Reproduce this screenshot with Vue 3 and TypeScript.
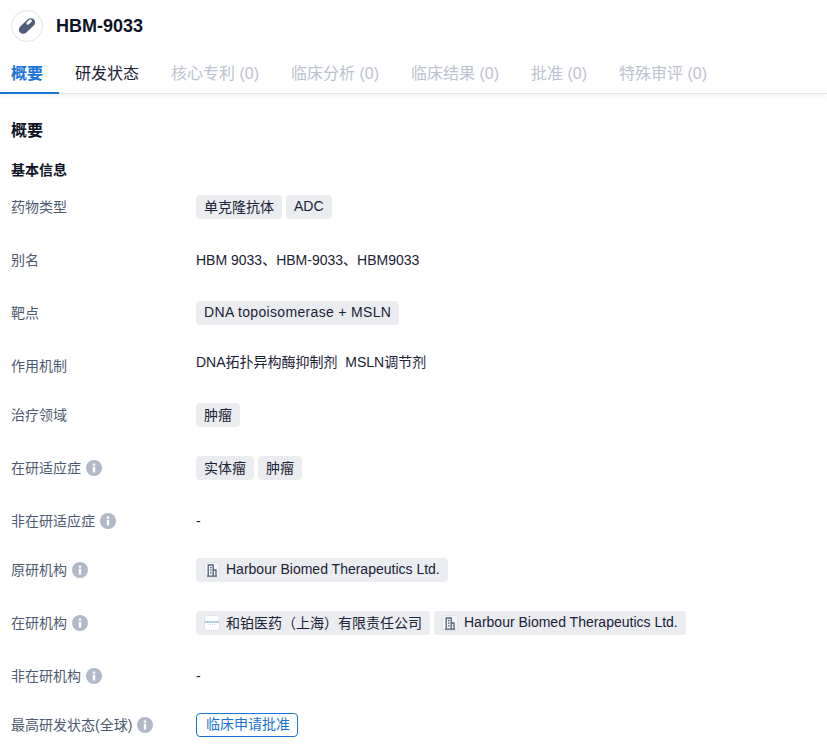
<script setup lang="ts">
interface Tag { text: string; icon?: 'building' | 'logo'; wide?: boolean }
interface Row { label: string; info?: boolean; short?: boolean; tight?: boolean; tags?: Tag[]; text?: string; status?: string }

const tabs = [
  { text: '概要', state: 'active' },
  { text: '研发状态', state: 'normal' },
  { text: '核心专利 (0)', state: 'off' },
  { text: '临床分析 (0)', state: 'off' },
  { text: '临床结果 (0)', state: 'off' },
  { text: '批准 (0)', state: 'off' },
  { text: '特殊审评 (0)', state: 'off' },
]

const hb = 'Harbour Biomed Therapeutics Ltd.'
const rows: Row[] = [
  { label: '药物类型', tags: [{ text: '单克隆抗体' }, { text: 'ADC' }] },
  { label: '别名', text: 'HBM 9033、HBM-9033、HBM9033' },
  { label: '靶点', tags: [{ text: 'DNA topoisomerase + MSLN', wide: true }] },
  { label: '作用机制', short: true, tight: true, text: 'DNA拓扑异构酶抑制剂  MSLN调节剂' },
  { label: '治疗领域', tags: [{ text: '肿瘤' }] },
  { label: '在研适应症', info: true, tags: [{ text: '实体瘤' }, { text: '肿瘤' }] },
  { label: '非在研适应症', info: true, short: true, text: '-' },
  { label: '原研机构', info: true, tags: [{ text: hb, icon: 'building' }] },
  { label: '在研机构', info: true, tags: [{ text: '和铂医药（上海）有限责任公司', icon: 'logo' }, { text: hb, icon: 'building' }] },
  { label: '非在研机构', info: true, short: true, text: '-' },
  { label: '最高研发状态(全球)', info: true, status: '临床申请批准' },
]
</script>

<template>
  <div class="page">
    <header class="head">
      <span class="avatar">
        <svg width="20" height="20" viewBox="0 0 20 20">
          <g transform="rotate(-43 10 10)">
            <rect x="0.5" y="5.7" width="19" height="8.6" rx="4.3" fill="#4f5d78" />
            <rect x="11" y="7.1" width="6.4" height="3" rx="1.5" fill="#fff" />
          </g>
        </svg>
      </span>
      <h1 class="title">HBM-9033</h1>
    </header>

    <nav class="tabs">
      <span v-for="t in tabs" :key="t.text" class="tab" :class="t.state">{{ t.text }}</span>
    </nav>

    <main class="body">
      <h2 class="h2">概要</h2>
      <h3 class="h3">基本信息</h3>
      <div class="rows">
        <div v-for="r in rows" :key="r.label" class="row" :class="{ short: r.short, tight: r.tight }">
          <div class="label">
            <span class="label-text">{{ r.label }}</span>
            <svg v-if="r.info" class="info" width="16" height="16" viewBox="0 0 16 16">
              <circle cx="8" cy="8" r="8" fill="#b1b8c7" />
              <rect x="6.8" y="3.5" width="2.4" height="2.2" fill="#fff" />
              <rect x="6.8" y="6.8" width="2.4" height="5.7" fill="#fff" />
            </svg>
          </div>
          <div class="value">
            <span v-if="r.text" class="plain">{{ r.text }}</span>
            <span v-for="t in r.tags" :key="t.text" class="tag" :class="{ wide: t.wide }">
              <span v-if="t.icon" class="tag-icon" :class="t.icon">
                <svg v-if="t.icon === 'building'" width="12" height="13" viewBox="0 0 12 13" fill="none" stroke="#4f5d78" stroke-width="1.3">
                  <path d="M2.2 12.2V1h5v11.2M7.2 6h2.8v6.2M1 12.2h10M4 3.6h1.6M4 6.2h1.6M4 8.8h1.6" />
                </svg>
                <svg v-else width="14" height="8" viewBox="0 0 14 8">
                  <line x1="0" y1="3" x2="14" y2="3" stroke="#6fa9d6" stroke-width="1.4" stroke-dasharray="1.2 0.5" />
                  <line x1="3" y1="5.5" x2="11" y2="5.5" stroke="#c3dcea" stroke-width="1" stroke-dasharray="1 1" />
                </svg>
              </span>
              <span class="tag-text">{{ t.text }}</span>
            </span>
            <span v-if="r.status" class="status">{{ r.status }}</span>
          </div>
        </div>
      </div>
    </main>
  </div>
</template>

<style>
html, body { margin: 0; background: #fff; }
</style>

<style scoped>
.page {
  width: 827px;
  height: 748px;
  overflow: hidden;
  font-family: "Liberation Sans", "Noto Sans CJK SC", sans-serif;
  font-size: 14px;
  color: #1b2236;
}
.head {
  display: flex;
  align-items: center;
  gap: 13px;
  padding: 10px 11px 0;
  height: 32px;
}
.avatar {
  width: 30px;
  height: 30px;
  border: 1px solid #dfe2e8;
  border-radius: 50%;
  display: flex;
  align-items: center;
  justify-content: center;
}
.title {
  margin: 0;
  font-size: 18px;
  font-weight: 700;
  color: #0e1426;
}
.tabs {
  display: flex;
  margin-top: 10px;
  height: 42px;
  box-sizing: border-box;
  border-bottom: 1px solid #e2e4e9;
  box-shadow: 0 2px 4px rgba(30, 40, 60, 0.06);
}
.tab {
  padding: 0 16px;
  line-height: 44px;
  font-size: 16px;
  height: 42px;
  box-sizing: border-box;
  white-space: nowrap;
}
.tab.active {
  padding-left: 11px;
  color: #1a73d9;
  font-weight: 700;
  border-bottom: 2px solid #1a73d9;
}
.tab.normal { color: #1b2236; }
.tab.off { color: #bcc2cf; }
.body { padding: 0 11px; }
.h2 {
  margin: 27px 0 0;
  font-size: 16px;
  line-height: 20px;
  font-weight: 700;
  color: #0e1426;
}
.h3 {
  margin: 19px 0 0;
  font-size: 14px;
  line-height: 20px;
  font-weight: 700;
  color: #0e1426;
}
.rows {
  display: flex;
  flex-direction: column;
  gap: 29px;
  margin-top: 15px;
}
.row {
  display: flex;
  height: 24px;
}
.row.short { height: 20px; }
.label {
  width: 185px;
  flex: none;
  display: flex;
  align-items: center;
  gap: 5px;
  height: 24px;
  color: #4e5a70;
}
.label-text { margin-bottom: 2px; }
.info { flex: none; }
.value {
  display: flex;
  gap: 4px;
  align-items: flex-start;
}
.plain {
  line-height: 24px;
  white-space: pre;
  color: #1b2236;
}
.tight .plain {
  line-height: 20px;
  margin-top: -2px;
}
.tag {
  display: inline-flex;
  align-items: center;
  height: 24px;
  padding: 0 8px;
  background: #eaecf0;
  border-radius: 4px;
  white-space: nowrap;
  color: #1b2236;
}
.tag.wide { letter-spacing: 0.33px; }
.tag-text { margin-bottom: 2px; }
.tag-icon {
  width: 16px;
  height: 16px;
  margin-right: 6px;
  border: 1px solid #e0e2e7;
  border-radius: 3px;
  display: flex;
  align-items: center;
  justify-content: center;
  box-sizing: border-box;
}
.tag-icon.logo { background: #fff; }
.tag-icon.building { background: #f5f6f8; }
.status {
  height: 24px;
  line-height: 21px;
  box-sizing: border-box;
  padding: 0 8px 0 9px;
  width: 102px;
  white-space: nowrap;
  border: 1px solid #1a73d9;
  border-radius: 4px;
  color: #1a73d9;
}
</style>
